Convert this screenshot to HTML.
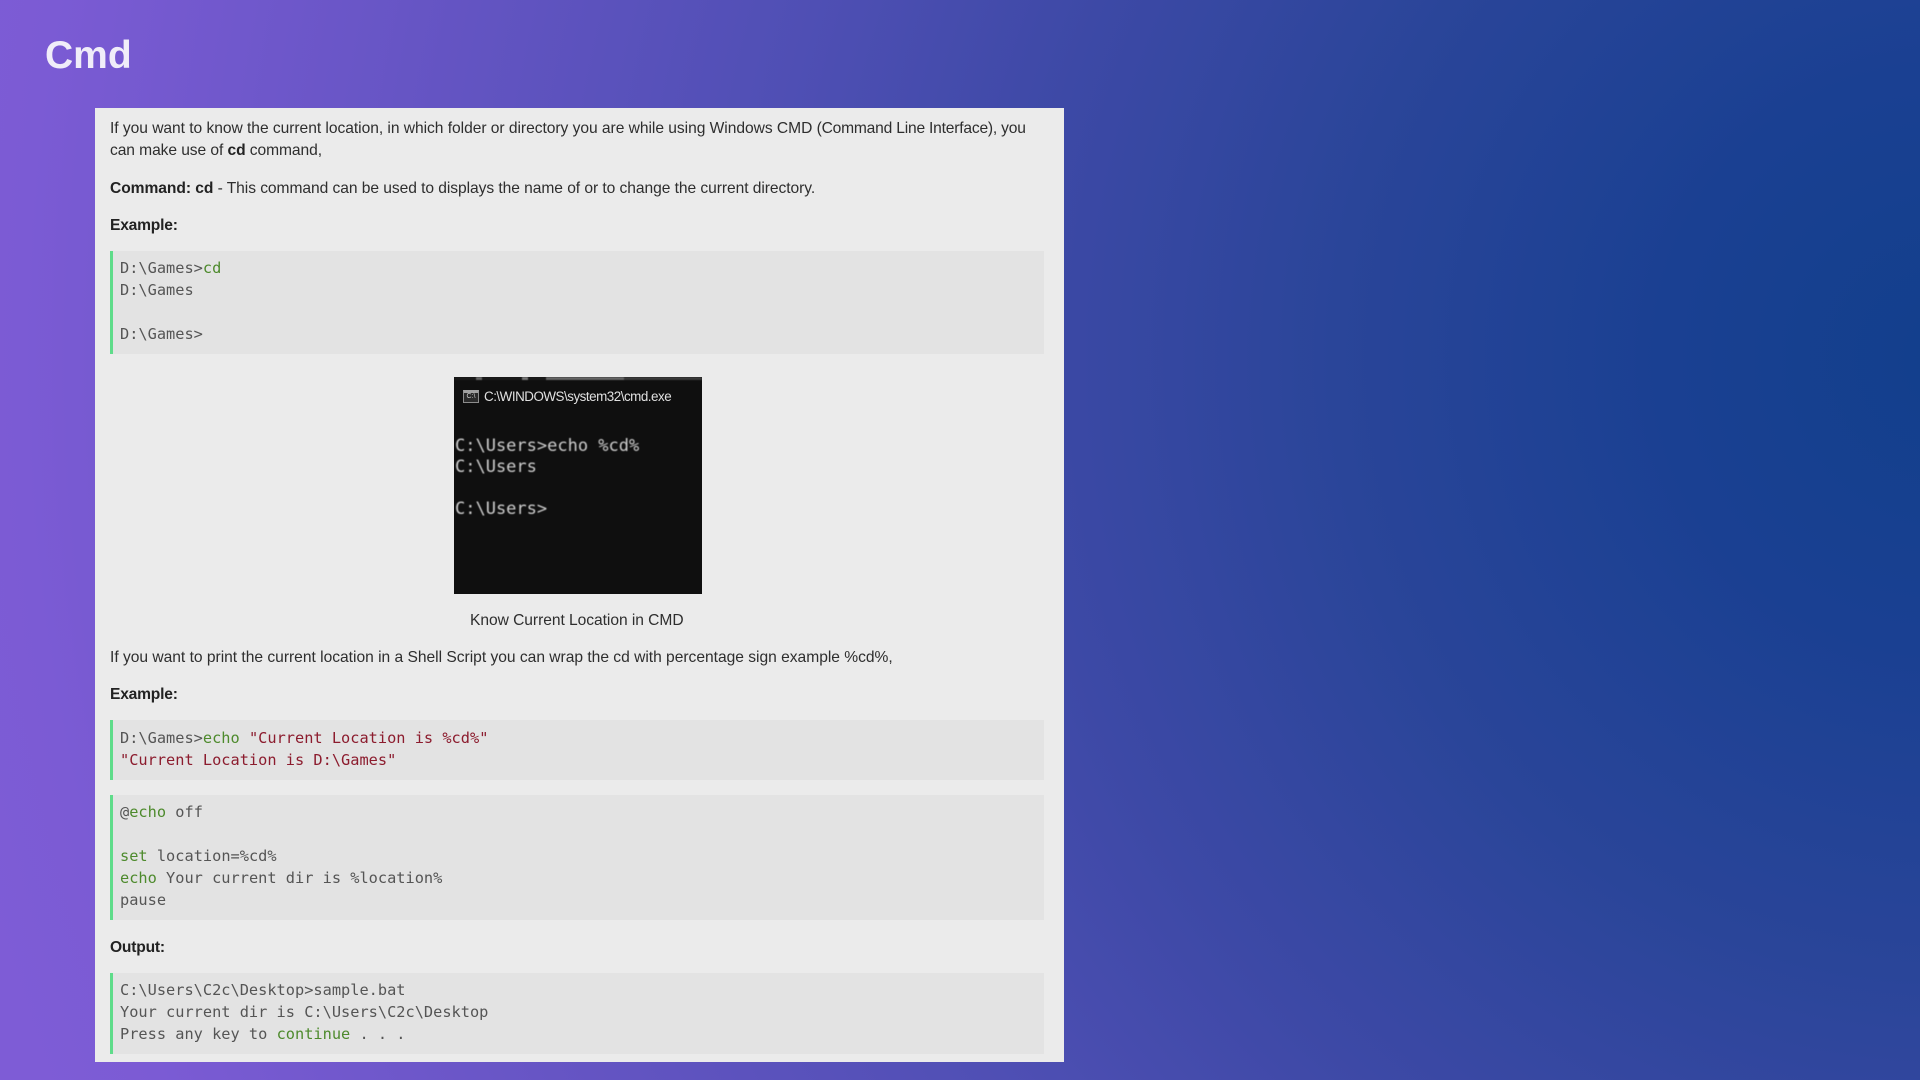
<!DOCTYPE html>
<html><head><meta charset="utf-8"><title>Cmd</title>
<style>
html,body{margin:0;padding:0;width:1920px;height:1080px;overflow:hidden}
body{position:relative;background:radial-gradient(circle 2050px at 1950px 360px,#123f8c 0,#1a4092 14%,#2a4599 30%,#3d49a6 45%,#4f4fb4 58%,#6354c2 74%,#7b5bd4 94%,#7e5cd6 100%);font-family:"Liberation Sans",sans-serif}
h1{position:absolute;left:45px;top:33px;margin:0;font-size:39px;line-height:46px;font-weight:700;color:#f0edf9;filter:blur(.3px)}
#card{position:absolute;left:95px;top:108px;width:969px;height:954px;background:#ebebeb}
.t{position:absolute;left:110px;font-size:15.6px;line-height:22px;color:#2e2e2e;white-space:pre;filter:blur(.35px)}
.t b{color:#222}
.blk{position:absolute;left:110px;width:934px;background:#e3e3e3;border-left:3px solid #5fdc8a;box-sizing:border-box}
.c{position:absolute;left:120px;font-family:"DejaVu Sans Mono","Liberation Mono",monospace;font-size:15.3px;line-height:22px;color:#555;white-space:pre;filter:blur(.35px)}
.g{color:#4d8a2c}.r{color:#8c1c2e}
#img{position:absolute;left:454px;top:377px;width:248px;height:217px;background:#0f0f0f;overflow:hidden}
#img .m{position:absolute;left:1px;font-family:"DejaVu Sans Mono",monospace;font-size:17px;line-height:22px;color:#cfcfcf;white-space:pre;filter:blur(.4px)}
#img .h{position:absolute;left:30px;top:11px;font-size:13.4px;letter-spacing:-.48px;line-height:18px;color:#e0e0e0;white-space:pre;filter:blur(.3px)}
#img .i{position:absolute;left:9px;top:13px;width:16px;height:13px;border:1px solid #8c8c8c;border-top:3px solid #a0a0a0;background:#2a2a2a;box-sizing:border-box;font:7px/8px "Liberation Sans",sans-serif;color:#ccc;text-align:center}
#img .s{position:absolute;left:0;top:0;width:248px;height:3px;filter:blur(.4px);background:linear-gradient(90deg,#1a1a1a 0 22px,#666 22px 28px,#1a1a1a 28px 68px,#777 68px 74px,#1a1a1a 74px 92px,#666 92px 170px,#3a3a3a 170px 248px)}
</style></head><body>
<h1>Cmd</h1>
<div id="card"></div>
<div class="t" style="top:118px"><span style="letter-spacing:-.04px">If you want to know the current location, in which folder or directory you are while using Windows CMD </span><span style="letter-spacing:-.2px">(Command Line Interface), you</span></div>
<div class="t" style="top:140px;letter-spacing:-.08px">can make use of <b>cd</b> command,</div>
<div class="t" style="top:178px;letter-spacing:-.06px"><b>Command: cd</b> - This command can be used to displays the name of or to change the current directory.</div>
<div class="t" style="top:215px;letter-spacing:-.2px"><b>Example:</b></div>
<div class="blk" style="top:251px;height:103px"></div>
<div class="c" style="top:257px">D:\Games&gt;<span class="g">cd</span></div>
<div class="c" style="top:279px">D:\Games</div>
<div class="c" style="top:323px">D:\Games&gt;</div>
<div id="img"><div class="s"></div><div class="i">C:\</div><div class="h">C:\WINDOWS\system32\cmd.exe</div>
<div class="m" style="top:58px">C:\Users&gt;echo %cd%</div>
<div class="m" style="top:79px">C:\Users</div>
<div class="m" style="top:121px">C:\Users&gt;</div></div>
<div class="t" style="top:610px;left:470px;letter-spacing:-.05px">Know Current Location in CMD</div>
<div class="t" style="top:647px;letter-spacing:-.015px">If you want to print the current location in a Shell Script you can wrap the cd with percentage sign example %cd%,</div>
<div class="t" style="top:684px;letter-spacing:-.2px"><b>Example:</b></div>
<div class="blk" style="top:720px;height:60px"></div>
<div class="c" style="top:727px">D:\Games&gt;<span class="g">echo</span> <span class="r">"Current Location is %cd%"</span></div>
<div class="c r" style="top:749px">"Current Location is D:\Games"</div>
<div class="blk" style="top:795px;height:125px"></div>
<div class="c" style="top:801px">@<span class="g">echo</span> off</div>
<div class="c" style="top:845px"><span class="g">set</span> location=%cd%</div>
<div class="c" style="top:867px"><span class="g">echo</span> Your current dir is %location%</div>
<div class="c" style="top:889px">pause</div>
<div class="t" style="top:937px;letter-spacing:-.2px"><b>Output:</b></div>
<div class="blk" style="top:973px;height:81px"></div>
<div class="c" style="top:979px">C:\Users\C2c\Desktop&gt;sample.bat</div>
<div class="c" style="top:1001px">Your current dir is C:\Users\C2c\Desktop</div>
<div class="c" style="top:1023px">Press any key to <span class="g">continue</span> . . .</div>
</body></html>
